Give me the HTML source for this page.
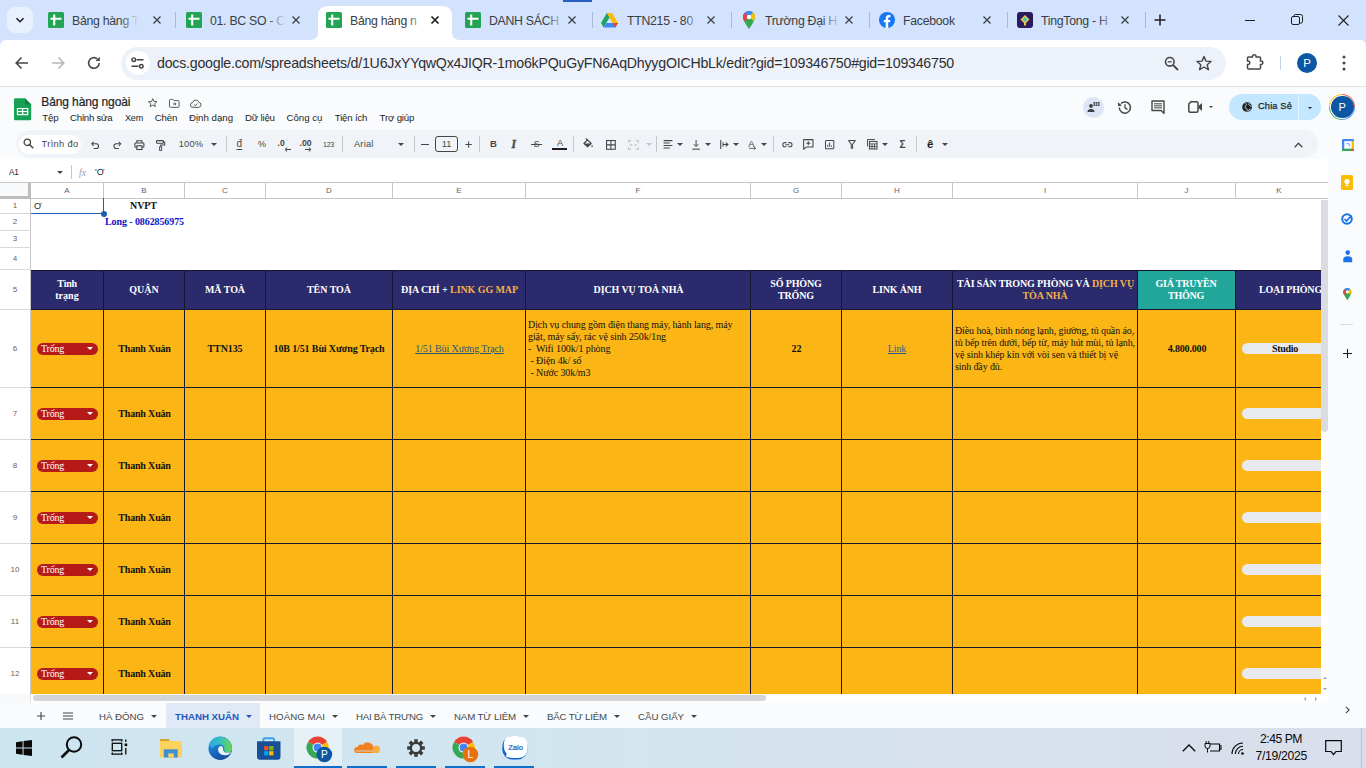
<!DOCTYPE html>
<html lang="vi"><head><meta charset="utf-8"><title>Bảng hàng ngoài - Google Trang tính</title>
<style>
*{box-sizing:border-box;margin:0;padding:0}
html,body{width:1366px;height:768px;overflow:hidden;background:#fff;font-family:"Liberation Sans",sans-serif;color:#1f1f1f}
div,span,svg{position:absolute}
svg{overflow:visible}
#tabstrip{left:0;top:0;width:1366px;height:52px;background:#d3e3fd}
#navbar{left:0;top:40px;width:1366px;height:47px;background:#fff;border-bottom:1px solid #dde1e8;border-radius:6px 6px 0 0}
#omni{left:121px;top:6.500px;width:1105px;height:33px;border-radius:17px;background:#edf2fa}
#app{left:0;top:87px;width:1366px;height:641px;background:#f9fbfd}
#tb{left:16px;top:130px;width:1302px;height:28px;border-radius:14px;background:#f0f4f9}
#fbar{left:0;top:159px;width:1328px;height:23px;background:#fff}
#grid{left:0;top:182px;width:1328px;height:512px;background:#fff;overflow:hidden}
.ch{top:0;height:17px;background:#fff;border-right:1px solid #c7c7c7;border-bottom:1px solid #c7c7c7;border-top:1px solid #c7c7c7;font-size:8px;color:#5f6368;text-align:center;line-height:15px}
.rh{left:0;width:31px;background:#fff;border-right:1px solid #c7c7c7;border-bottom:1px solid #d9d9d9;font-size:8px;color:#5f6368;text-align:center}
.c{font-family:"Liberation Serif",serif;border-right:1px solid #16162e;border-bottom:1px solid #16162e;overflow:hidden}
.h{background:#2a2a6c;border-top:1px solid #16162e}
.o{background:#fbb615}
.chip{left:6px;width:61px;height:12px;border-radius:6px;background:#b51a18}
.chip i{position:absolute;right:5px;top:4.5px;border-left:3px solid transparent;border-right:3px solid transparent;border-top:3.5px solid #fff}
.pill{left:7px;width:90px;height:11px;border-radius:6px;background:#e8eaed}
#sheetbar{left:0;top:703px;width:1366px;height:25px;background:#f9fbfd}
.arr{border-left:3px solid transparent;border-right:3px solid transparent;border-top:3.5px solid #444746;width:0;height:0}
#taskbar{left:0;top:728px;width:1366px;height:40px;background:linear-gradient(90deg,#cde5f0 0%,#d2e6f0 40%,#d7e2ed 68%,#d9deea 100%)}
.sep{width:1px;background:#c7c7c7}
</style></head><body>
<div id="tabstrip"><div style="left:7px;top:7px;width:26px;height:26px;border-radius:8px;background:#e8effd"></div><svg style="left:14px;top:14px" width="12" height="12" viewBox="0 0 12 12"><path d="M2.5 4.2 L6 7.7 L9.5 4.2" fill="none" stroke="#1f1f1f" stroke-width="1.6"/></svg><div style="left:563px;top:0;width:29px;height:1.500px;background:#2a5fc0"></div><svg style="left:310px;top:6px" width="150" height="34" viewBox="0 0 150 34"><path d="M0 34 Q8 34 8 26 V10 Q8 0 18 0 H132 Q142 0 142 10 V26 Q142 34 150 34 Z" fill="#fff"/></svg><svg style="left:48px;top:12px" width="16" height="16" viewBox="0 0 16 16"><rect width="16" height="16" rx="1.5" fill="#23a455"/><path d="M2.500 6.800H13.500 M6.200 2.500V13.500" stroke="#fff" stroke-width="2.100" fill="none"/></svg><span class="" style="position:absolute;top:12.8px;height:16px;line-height:16px;font-size:12.3px;font-family:'Liberation Sans',sans-serif;white-space:nowrap;color:#3a3e44;left:72px;letter-spacing:-0.280px;max-width:69px;overflow:hidden;">Bảng hàng T</span><div style="left:120px;top:10px;width:22px;height:22px;background:linear-gradient(90deg,rgba(211,227,253,0),rgba(211,227,253,1) 85%)"></div><svg style="left:186px;top:12px" width="16" height="16" viewBox="0 0 16 16"><rect width="16" height="16" rx="1.5" fill="#23a455"/><path d="M2.500 6.800H13.500 M6.200 2.500V13.500" stroke="#fff" stroke-width="2.100" fill="none"/></svg><span class="" style="position:absolute;top:12.8px;height:16px;line-height:16px;font-size:12.3px;font-family:'Liberation Sans',sans-serif;white-space:nowrap;color:#3a3e44;left:210px;letter-spacing:-0.280px;max-width:78px;overflow:hidden;">01. BC SO - C</span><div style="left:267px;top:10px;width:22px;height:22px;background:linear-gradient(90deg,rgba(211,227,253,0),rgba(211,227,253,1) 85%)"></div><svg style="left:326px;top:12px" width="16" height="16" viewBox="0 0 16 16"><rect width="16" height="16" rx="1.5" fill="#23a455"/><path d="M2.500 6.800H13.500 M6.200 2.500V13.500" stroke="#fff" stroke-width="2.100" fill="none"/></svg><span class="" style="position:absolute;top:12.8px;height:16px;line-height:16px;font-size:12.3px;font-family:'Liberation Sans',sans-serif;white-space:nowrap;color:#3a3e44;left:350px;letter-spacing:-0.280px;max-width:78px;overflow:hidden;">Bảng hàng n</span><div style="left:407px;top:10px;width:22px;height:22px;background:linear-gradient(90deg,rgba(255,255,255,0),rgba(255,255,255,1) 85%)"></div><svg style="left:465px;top:12px" width="16" height="16" viewBox="0 0 16 16"><rect width="16" height="16" rx="1.5" fill="#23a455"/><path d="M2.500 6.800H13.500 M6.200 2.500V13.500" stroke="#fff" stroke-width="2.100" fill="none"/></svg><span class="" style="position:absolute;top:12.8px;height:16px;line-height:16px;font-size:12.3px;font-family:'Liberation Sans',sans-serif;white-space:nowrap;color:#3a3e44;left:489px;letter-spacing:-0.280px;max-width:78px;overflow:hidden;">DANH SÁCH</span><div style="left:546px;top:10px;width:22px;height:22px;background:linear-gradient(90deg,rgba(211,227,253,0),rgba(211,227,253,1) 85%)"></div><svg style="left:601px;top:12px" width="17" height="16" viewBox="0 0 17 16"><path d="M5.8 1H11.2L17 11H11.6Z" fill="#fbbc04"/><path d="M5.8 1L0 11L2.7 15.5L8.5 5.6Z" fill="#1fa463"/><path d="M2.7 15.5H14.3L17 11H5.4Z" fill="#4285f4"/><path d="M11.6 11H17L14.3 15.5Z" fill="#ea4335"/></svg><span class="" style="position:absolute;top:12.8px;height:16px;line-height:16px;font-size:12.3px;font-family:'Liberation Sans',sans-serif;white-space:nowrap;color:#3a3e44;left:627px;letter-spacing:-0.280px;max-width:78px;overflow:hidden;">TTN215 - 80</span><div style="left:684px;top:10px;width:22px;height:22px;background:linear-gradient(90deg,rgba(211,227,253,0),rgba(211,227,253,1) 85%)"></div><svg style="left:743px;top:11px" width="12" height="18" viewBox="0 0 12 18"><path d="M6 0C2.7 0 0 2.6 0 6c0 4 6 12 6 12s6-8 6-12C12 2.6 9.300 0 6 0z" fill="#34a853"/><path d="M6 0C2.7 0 0 2.600 0 6c0 1.300.6 3 1.500 4.700L9.800 1.400A6 6 0 0 0 6 0z" fill="#4285f4"/><path d="M9.800 1.400L6 6 10.600 9.900C11.400 8.400 12 7 12 6c0-1.900-.9-3.500-2.200-4.600z" fill="#fbbc04"/><path d="M1.500 2.100A6 6 0 0 0 0 6c0 1.300.6 3 1.500 4.700L6 6z" fill="#ea4335"/><circle cx="6" cy="6" r="2.200" fill="#fff"/></svg><span class="" style="position:absolute;top:12.8px;height:16px;line-height:16px;font-size:12.3px;font-family:'Liberation Sans',sans-serif;white-space:nowrap;color:#3a3e44;left:765px;letter-spacing:-0.280px;max-width:78px;overflow:hidden;">Trường Đại H</span><div style="left:822px;top:10px;width:22px;height:22px;background:linear-gradient(90deg,rgba(211,227,253,0),rgba(211,227,253,1) 85%)"></div><svg style="left:879px;top:12px" width="16" height="16" viewBox="0 0 16 16"><circle cx="8" cy="8" r="8" fill="#1877f2"/><path d="M11 10.300l.4-2.300H9.200V6.500c0-.700.3-1.300 1.300-1.300h1V3.200S10.600 3 9.700 3C7.800 3 6.700 4.100 6.700 6.100V8H4.700v2.300h2V16h2.500v-5.700z" fill="#fff"/></svg><span class="" style="position:absolute;top:12.8px;height:16px;line-height:16px;font-size:12.3px;font-family:'Liberation Sans',sans-serif;white-space:nowrap;color:#3a3e44;left:903px;letter-spacing:-0.280px;max-width:64px;overflow:hidden;">Facebook</span><svg style="left:1017px;top:12px" width="16" height="16" viewBox="0 0 16 16"><rect width="16" height="16" rx="3" fill="#2a1a5e"/><path d="M8 3L12.500 7.500L8 12L3.500 7.500Z" fill="#f4c542"/><path d="M8 5L10.500 7.500L8 10L5.500 7.500Z" fill="#3ec6c0"/><rect x="7" y="11" width="2" height="2.500" fill="#f4c542"/></svg><span class="" style="position:absolute;top:12.8px;height:16px;line-height:16px;font-size:12.3px;font-family:'Liberation Sans',sans-serif;white-space:nowrap;color:#3a3e44;left:1041px;letter-spacing:-0.280px;max-width:78px;overflow:hidden;">TingTong - H</span><div style="left:1098px;top:10px;width:22px;height:22px;background:linear-gradient(90deg,rgba(211,227,253,0),rgba(211,227,253,1) 85%)"></div><svg style="left:153px;top:16px" width="8" height="8" viewBox="0 0 8 8"><path d="M0.500 0.500L7.500 7.500M7.500 0.500L0.500 7.500" stroke="#3c4043" stroke-width="1.3" fill="none"/></svg><svg style="left:292px;top:16px" width="8" height="8" viewBox="0 0 8 8"><path d="M0.500 0.500L7.500 7.500M7.500 0.500L0.500 7.500" stroke="#3c4043" stroke-width="1.3" fill="none"/></svg><svg style="left:431px;top:16px" width="8" height="8" viewBox="0 0 8 8"><path d="M0.500 0.500L7.500 7.500M7.500 0.500L0.500 7.500" stroke="#1f1f1f" stroke-width="1.7" fill="none"/></svg><svg style="left:568px;top:16px" width="8" height="8" viewBox="0 0 8 8"><path d="M0.500 0.500L7.500 7.500M7.500 0.500L0.500 7.500" stroke="#3c4043" stroke-width="1.3" fill="none"/></svg><svg style="left:707px;top:16px" width="8" height="8" viewBox="0 0 8 8"><path d="M0.500 0.500L7.500 7.500M7.500 0.500L0.500 7.500" stroke="#3c4043" stroke-width="1.3" fill="none"/></svg><svg style="left:845px;top:16px" width="8" height="8" viewBox="0 0 8 8"><path d="M0.500 0.500L7.500 7.500M7.500 0.500L0.500 7.500" stroke="#3c4043" stroke-width="1.3" fill="none"/></svg><svg style="left:983px;top:16px" width="8" height="8" viewBox="0 0 8 8"><path d="M0.500 0.500L7.500 7.500M7.500 0.500L0.500 7.500" stroke="#3c4043" stroke-width="1.3" fill="none"/></svg><svg style="left:1121px;top:16px" width="8" height="8" viewBox="0 0 8 8"><path d="M0.500 0.500L7.500 7.500M7.500 0.500L0.500 7.500" stroke="#3c4043" stroke-width="1.3" fill="none"/></svg><div style="left:175px;top:12px;width:1px;height:16px;background:#a8b8d8"></div><div style="left:592px;top:12px;width:1px;height:16px;background:#a8b8d8"></div><div style="left:731px;top:12px;width:1px;height:16px;background:#a8b8d8"></div><div style="left:869px;top:12px;width:1px;height:16px;background:#a8b8d8"></div><div style="left:1007px;top:12px;width:1px;height:16px;background:#a8b8d8"></div><div style="left:1145px;top:12px;width:1px;height:16px;background:#a8b8d8"></div><svg style="left:1154px;top:14px" width="12" height="12" viewBox="0 0 12 12"><path d="M6 0.500V11.500M0.500 6H11.500" stroke="#1f1f1f" stroke-width="1.5"/></svg><div style="left:1245px;top:20px;width:10px;height:1px;background:#1f1f1f"></div><svg style="left:1291px;top:14px" width="12" height="12" viewBox="0 0 12 12"><rect x="0.500" y="2.500" width="8" height="8" rx="1.500" fill="none" stroke="#1f1f1f"/><path d="M3 2.500V1.800Q3 0.500 4.300 0.500H9.500Q11.500 0.500 11.500 2.500V7.700Q11.500 9 10.200 9H9" fill="none" stroke="#1f1f1f"/></svg><svg style="left:1338px;top:15px" width="11" height="11" viewBox="0 0 11 11"><path d="M0.500 0.500L10.500 10.500M10.500 0.500L0.500 10.500" stroke="#1f1f1f" stroke-width="1.100"/></svg></div><div id="navbar"><div id="omni"></div><svg style="left:15px;top:16px" width="14" height="14" viewBox="0 0 14 14"><path d="M13 7H1.500M6.500 1.500L1.200 7L6.500 12.500" fill="none" stroke="#444746" stroke-width="1.600"/></svg><svg style="left:51px;top:16px" width="14" height="14" viewBox="0 0 14 14"><path d="M1 7H12.500M7.500 1.500L12.800 7L7.500 12.500" fill="none" stroke="#b4b7bb" stroke-width="1.600"/></svg><svg style="left:87px;top:16px" width="14" height="14" viewBox="0 0 14 14"><path d="M12.200 7A5.300 5.300 0 1 1 10.400 3" fill="none" stroke="#444746" stroke-width="1.600"/><path d="M12.800 0.800V5H8.600Z" fill="#444746"/></svg><div style="left:125.500px;top:11px;width:24px;height:24px;border-radius:12px;background:#fff"></div><svg style="left:131px;top:17px" width="13" height="12" viewBox="0 0 13 12"><path d="M5.500 2.700H12.500M0.500 9.300H7.500" stroke="#3c4043" stroke-width="1.500"/><circle cx="2.700" cy="2.700" r="1.800" fill="none" stroke="#3c4043" stroke-width="1.400"/><circle cx="10.300" cy="9.300" r="1.800" fill="none" stroke="#3c4043" stroke-width="1.400"/></svg><span class="" style="position:absolute;top:14.0px;height:18px;line-height:18px;font-size:14.2px;font-family:'Liberation Sans',sans-serif;white-space:nowrap;color:#2d2f33;left:157px;letter-spacing:-0.232px;">docs.google.com/spreadsheets/d/1U6JxYYqwQx4JIQR-1mo6kPQuGyFN6AqDhyygOICHbLk/edit?gid=109346750#gid=109346750</span><svg style="left:1164px;top:16px" width="15" height="15" viewBox="0 0 15 15"><circle cx="5.800" cy="5.800" r="4.300" fill="none" stroke="#444746" stroke-width="1.600"/><path d="M9 9L14 14" stroke="#444746" stroke-width="1.800"/><path d="M3.800 5.800H7.800" stroke="#444746" stroke-width="1.200"/></svg><svg style="left:1196px;top:15px" width="16" height="16" viewBox="0 0 16 16"><path d="M8 1.500L10 6.100L15 6.500L11.200 9.800L12.400 14.700L8 12L3.600 14.700L4.800 9.800L1 6.500L6 6.100Z" fill="none" stroke="#444746" stroke-width="1.400" stroke-linejoin="round"/></svg><svg style="left:1246px;top:14px" width="17" height="17" viewBox="0 0 17 17"><path d="M6.500 3V2.500A1.800 1.800 0 0 1 10.100 2.500V3H13.500Q14.500 3 14.500 4V7H15A1.800 1.800 0 0 1 15 10.600H14.500V14Q14.500 15 13.500 15H2.500Q1.500 15 1.500 14V10.600H2A1.800 1.800 0 0 0 2 7H1.500V4Q1.500 3 2.500 3Z" fill="none" stroke="#444746" stroke-width="1.500"/></svg><div style="left:1280px;top:16px;width:1px;height:14px;background:#c5d4ee"></div><div style="left:1297px;top:13px;width:20px;height:20px;border-radius:10px;background:#0b57a4"></div><span class="" style="position:absolute;top:16.0px;height:15px;line-height:15px;font-size:11.5px;font-family:'Liberation Sans',sans-serif;white-space:nowrap;color:#fff;left:1307px;transform:translateX(-50%);">P</span><svg style="left:1342px;top:15px" width="4" height="16" viewBox="0 0 4 16"><circle cx="2" cy="2" r="1.500" fill="#444746"/><circle cx="2" cy="8" r="1.500" fill="#444746"/><circle cx="2" cy="14" r="1.500" fill="#444746"/></svg></div><div id="app"></div><svg style="left:14.300px;top:97.500px" width="17.200" height="22.700" viewBox="0 0 18 23"><path d="M1.500 0H11.500L18 6.500V21.500Q18 23 16.500 23H1.500Q0 23 0 21.500V1.500Q0 0 1.500 0Z" fill="#18a154"/><path d="M11.500 0L18 6.500H13Q11.500 6.500 11.500 5Z" fill="#0f8444"/><rect x="3" y="10" width="12" height="7.600" rx="0.600" fill="#fff"/><rect x="4.300" y="11.200" width="4" height="2" fill="#18a154"/><rect x="9.700" y="11.200" width="4" height="2" fill="#18a154"/><rect x="4.300" y="14.400" width="4" height="2" fill="#18a154"/><rect x="9.700" y="14.400" width="4" height="2" fill="#18a154"/></svg><span class="" style="position:absolute;top:93.7px;height:16px;line-height:16px;font-size:12px;font-family:'Liberation Sans',sans-serif;white-space:nowrap;color:#1f1f1f;left:41.3px;letter-spacing:-0.117px;-webkit-text-stroke:0.200px #1f1f1f;">Bảng hàng ngoài</span><svg style="left:148px;top:98px" width="9.500" height="9.500" viewBox="0 0 11 11"><path d="M5.500 0.800L6.900 4L10.400 4.300L7.700 6.600L8.500 10L5.500 8.200L2.500 10L3.300 6.600L0.600 4.300L4.100 4Z" fill="none" stroke="#444746" stroke-width="1"/></svg><svg style="left:168.500px;top:98.500px" width="10.500" height="8.800" viewBox="0 0 12 10"><path d="M0.500 1.500Q0.500 0.500 1.500 0.500H4.500L5.700 1.800H10.500Q11.500 1.800 11.500 2.800V8.500Q11.500 9.500 10.500 9.500H1.500Q0.500 9.500 0.500 8.500Z" fill="none" stroke="#444746" stroke-width="1"/><path d="M4.500 5.600H8M6.500 4L8.100 5.600L6.500 7.200" fill="none" stroke="#444746" stroke-width="1"/></svg><svg style="left:189.500px;top:98.500px" width="11.500" height="8.800" viewBox="0 0 13 10"><path d="M3.200 9.500A2.700 2.700 0 0 1 3 4.100A3.600 3.600 0 0 1 9.900 3.600A3 3 0 0 1 10 9.500Z" fill="none" stroke="#444746" stroke-width="1"/><path d="M4.600 6.300L6 7.600L8.500 5" fill="none" stroke="#444746" stroke-width="1"/></svg><span class="" style="position:absolute;top:111.2px;height:13px;line-height:13px;font-size:9.7px;font-family:'Liberation Sans',sans-serif;white-space:nowrap;color:#1f1f1f;left:42.3px;letter-spacing:-0.234px;">Tệp</span><span class="" style="position:absolute;top:111.2px;height:13px;line-height:13px;font-size:9.7px;font-family:'Liberation Sans',sans-serif;white-space:nowrap;color:#1f1f1f;left:70px;letter-spacing:-0.248px;">Chỉnh sửa</span><span class="" style="position:absolute;top:111.7px;height:12px;line-height:12px;font-size:9.1px;font-family:'Liberation Sans',sans-serif;white-space:nowrap;color:#1f1f1f;left:125px;letter-spacing:-0.234px;">Xem</span><span class="" style="position:absolute;top:111.2px;height:13px;line-height:13px;font-size:9.7px;font-family:'Liberation Sans',sans-serif;white-space:nowrap;color:#1f1f1f;left:154.8px;letter-spacing:-0.168px;">Chèn</span><span class="" style="position:absolute;top:111.2px;height:13px;line-height:13px;font-size:9.7px;font-family:'Liberation Sans',sans-serif;white-space:nowrap;color:#1f1f1f;left:189px;letter-spacing:-0.019px;">Định dạng</span><span class="" style="position:absolute;top:111.2px;height:13px;line-height:13px;font-size:9.7px;font-family:'Liberation Sans',sans-serif;white-space:nowrap;color:#1f1f1f;left:245px;letter-spacing:-0.209px;">Dữ liệu</span><span class="" style="position:absolute;top:111.2px;height:13px;line-height:13px;font-size:9.7px;font-family:'Liberation Sans',sans-serif;white-space:nowrap;color:#1f1f1f;left:286.5px;letter-spacing:-0.013px;">Công cụ</span><span class="" style="position:absolute;top:111.2px;height:13px;line-height:13px;font-size:9.7px;font-family:'Liberation Sans',sans-serif;white-space:nowrap;color:#1f1f1f;left:334.8px;letter-spacing:-0.201px;">Tiện ích</span><span class="" style="position:absolute;top:111.2px;height:13px;line-height:13px;font-size:9.7px;font-family:'Liberation Sans',sans-serif;white-space:nowrap;color:#1f1f1f;left:379.5px;letter-spacing:-0.170px;">Trợ giúp</span><div style="left:1083px;top:97px;width:21px;height:21px;border-radius:11px;background:#dde5f7"></div><svg style="left:1087px;top:101px" width="13" height="12" viewBox="0 0 13 12"><circle cx="4" cy="5" r="1.900" fill="#3c4043"/><path d="M0.500 11Q0.500 8 4 8Q7.500 8 7.500 11Z" fill="#3c4043"/><path d="M6.500 1H12.500V5H6.500Z" fill="#3c4043"/><path d="M8.500 1V5M10.500 1V5M6.500 3H12.500" stroke="#dde5f7" stroke-width="0.600"/></svg><svg style="left:1117px;top:100px" width="15" height="15" viewBox="0 0 15 15"><path d="M2.300 7.500A5.600 5.600 0 1 0 4 3.500" fill="none" stroke="#444746" stroke-width="1.500"/><path d="M0.800 2.200L1.200 6.200L5.100 5.500Z" fill="#444746"/><path d="M8 4.200V7.800L10.500 9.500" fill="none" stroke="#444746" stroke-width="1.300"/></svg><svg style="left:1151px;top:100px" width="14" height="14" viewBox="0 0 14 14"><path d="M1 1H13V13.400L10.200 10.500H1Z" fill="none" stroke="#444746" stroke-width="1.400" stroke-linejoin="round"/><path d="M3 3.800H11M3 5.800H11M3 7.800H11" stroke="#444746" stroke-width="1"/></svg><svg style="left:1188px;top:101px" width="15" height="12" viewBox="0 0 15 12"><path d="M2.800 0.800H8.500Q10 0.800 10 2.300V9.700Q10 11.200 8.500 11.200H2.300Q0.800 11.200 0.800 9.700V3Z" fill="none" stroke="#444746" stroke-width="1.500" stroke-linejoin="round"/><path d="M10.500 5L14 2V10L10.500 7Z" fill="#444746"/></svg><div class="arr" style="left:1209px;top:106px;border-width:2.500px 2px 0 2px"></div><div style="left:1229px;top:94px;width:92px;height:26px;border-radius:13px;background:#c2e7ff"></div><div style="left:1298px;top:94px;width:1px;height:26px;background:#e3f3ff"></div><svg style="left:1242px;top:102.200px" width="10.200" height="10.200" viewBox="0 0 10 10"><circle cx="5" cy="5" r="4.800" fill="#1f1f1f"/><path d="M3.600 1.200Q5 2.200 4 3.400Q2.600 4 3 5.400L5 7Q5.400 8.500 4.600 9.300M6.800 1.200Q6.200 2.600 7.600 3.400Q8.800 3.800 9.200 4.600M6 9.200Q6.500 7.400 8.600 6.800" fill="none" stroke="#c2e7ff" stroke-width="0.900"/></svg><span class="" style="position:absolute;top:99.6px;height:12px;line-height:12px;font-size:9.3px;font-family:'Liberation Sans',sans-serif;white-space:nowrap;color:#1f1f1f;left:1258px;letter-spacing:0.132px;-webkit-text-stroke:0.250px #1f1f1f;">Chia Sẻ</span><div class="arr" style="left:1307.500px;top:106.700px;border-width:2.300px 2.200px 0 2.200px;border-top-color:#1f1f1f"></div><div style="left:1329.400px;top:94.200px;width:25.600px;height:25.600px;border-radius:13px;background:conic-gradient(#ea4335 0 25%,#4285f4 0 50%,#34a853 0 75%,#fbbc04 0);opacity:0.850"></div><div style="left:1330.200px;top:95px;width:24px;height:24px;border-radius:12px;background:#fff"></div><div style="left:1330.800px;top:95.600px;width:22.800px;height:22.800px;border-radius:12px;background:#0b57a4"></div><span class="" style="position:absolute;top:100.3px;height:14px;line-height:14px;font-size:11px;font-family:'Liberation Sans',sans-serif;white-space:nowrap;color:#fff;left:1342.2px;transform:translateX(-50%);">P</span><div id="tb"></div><div style="left:18.500px;top:134.500px;width:62.500px;height:19px;border-radius:9.500px;background:#fff"></div><svg style="left:23px;top:138px" width="11" height="11" viewBox="0 0 11 11"><circle cx="4.300" cy="4.300" r="3.200" fill="none" stroke="#444746" stroke-width="1.300"/><path d="M6.700 6.700L10.300 10.300" stroke="#444746" stroke-width="1.500"/></svg><span class="" style="position:absolute;top:138.0px;height:12px;line-height:12px;font-size:9.3px;font-family:'Liberation Sans',sans-serif;white-space:nowrap;color:#444746;left:41.5px;letter-spacing:0.350px;max-width:36.500px;overflow:hidden;">Trình đơn</span><svg style="left:91px;top:140.5px" width="8.5" height="8" viewBox="0 0 11 10"><path d="M1 3.500H6.800A3 3 0 0 1 6.800 9.500H3.500" fill="none" stroke="#444746" stroke-width="1.300"/><path d="M3.500 1L1 3.500L3.500 6" fill="none" stroke="#444746" stroke-width="1.300"/></svg><svg style="left:113px;top:140.5px" width="8.5" height="8" viewBox="0 0 11 10"><path d="M10 3.500H4.200A3 3 0 0 0 4.200 9.500H7.500" fill="none" stroke="#444746" stroke-width="1.300"/><path d="M7.500 1L10 3.500L7.500 6" fill="none" stroke="#444746" stroke-width="1.300"/></svg><svg style="left:133.5px;top:139.5px" width="10.8" height="10.2" viewBox="0 0 12 12"><path d="M3 3.500V0.800H9V3.500" fill="none" stroke="#444746" stroke-width="1.300"/><rect x="0.700" y="3.600" width="10.600" height="5" rx="1" fill="none" stroke="#444746" stroke-width="1.300"/><rect x="3" y="6.800" width="6" height="4.400" fill="#f0f4f9" stroke="#444746" stroke-width="1.300"/></svg><svg style="left:156px;top:139.5px" width="9.3" height="11" viewBox="0 0 11 13"><rect x="0.700" y="0.700" width="8" height="3.200" rx="0.600" fill="none" stroke="#444746" stroke-width="1.300"/><path d="M8.700 2.300H10.300V6H5.500V8" fill="none" stroke="#444746" stroke-width="1.200"/><rect x="4.300" y="8" width="2.400" height="4.300" fill="none" stroke="#444746" stroke-width="1.100"/></svg><span class="" style="position:absolute;top:138.3px;height:12px;line-height:12px;font-size:9.2px;font-family:'Liberation Sans',sans-serif;white-space:nowrap;color:#444746;left:178.7px;letter-spacing:0.250px;">100%</span><div class="arr" style="left:211px;top:143px;border-top-color:#444746"></div><div class="sep" style="left:226px;top:136px;height:16px"></div><span class="" style="position:absolute;top:137.0px;height:13px;line-height:13px;font-size:10px;font-family:'Liberation Sans',sans-serif;white-space:nowrap;color:#444746;left:236.5px;text-decoration:underline;text-underline-offset:1.500px;">đ</span><span class="" style="position:absolute;top:138.3px;height:12px;line-height:12px;font-size:9px;font-family:'Liberation Sans',sans-serif;white-space:nowrap;color:#444746;left:258px;">%</span><span class="" style="position:absolute;top:138.0px;height:11px;line-height:11px;font-size:8.7px;font-family:'Liberation Sans',sans-serif;white-space:nowrap;font-weight:bold;color:#444746;left:277.5px;">.0</span><svg style="left:284px;top:147px" width="7" height="5" viewBox="0 0 7 5"><path d="M7 2.500H1.500M3.200 0.500L1 2.500L3.200 4.500" fill="none" stroke="#444746" stroke-width="1"/></svg><span class="" style="position:absolute;top:138.0px;height:11px;line-height:11px;font-size:8.7px;font-family:'Liberation Sans',sans-serif;white-space:nowrap;font-weight:bold;color:#444746;left:299.5px;">.00</span><svg style="left:305px;top:147px" width="7" height="5" viewBox="0 0 7 5"><path d="M0 2.500H5.500M3.800 0.500L6 2.500L3.800 4.500" fill="none" stroke="#444746" stroke-width="1"/></svg><span class="" style="position:absolute;top:140.0px;height:9px;line-height:9px;font-size:7px;font-family:'Liberation Sans',sans-serif;white-space:nowrap;color:#444746;left:323px;letter-spacing:-0.229px;">123</span><div class="sep" style="left:342px;top:136px;height:16px"></div><span class="" style="position:absolute;top:138.2px;height:12px;line-height:12px;font-size:9.2px;font-family:'Liberation Sans',sans-serif;white-space:nowrap;color:#444746;left:354px;letter-spacing:0.222px;">Arial</span><div class="arr" style="left:398px;top:143px;border-top-color:#444746"></div><div class="sep" style="left:414px;top:136px;height:16px"></div><div style="left:421px;top:144px;width:8px;height:1.300px;background:#444746"></div><div style="left:435px;top:136px;width:23px;height:16px;border:1px solid #444746;border-radius:3px"></div><span class="" style="position:absolute;top:138.3px;height:12px;line-height:12px;font-size:9.2px;font-family:'Liberation Sans',sans-serif;white-space:nowrap;color:#444746;left:446.5px;transform:translateX(-50%);">11</span><svg style="left:465px;top:140.8px" width="7.2" height="7.2" viewBox="0 0 9 9"><path d="M4.500 0.500V8.500M0.500 4.500H8.500" fill="none" stroke="#444746" stroke-width="1.300"/></svg><div class="sep" style="left:479px;top:136px;height:16px"></div><span class="" style="position:absolute;top:138.3px;height:12px;line-height:12px;font-size:9.5px;font-family:'Liberation Sans',sans-serif;white-space:nowrap;font-weight:bold;color:#444746;left:490px;">B</span><span class="" style="position:absolute;top:136.8px;height:15px;line-height:15px;font-size:11.5px;font-family:'Liberation Serif',serif;white-space:nowrap;font-weight:bold;color:#444746;left:511.5px;font-style:italic;-webkit-text-stroke:0.400px #444746;">I</span><span class="" style="position:absolute;top:138.3px;height:12px;line-height:12px;font-size:9.2px;font-family:'Liberation Sans',sans-serif;white-space:nowrap;color:#444746;left:533.5px;">S</span><div style="left:531px;top:144px;width:11px;height:1px;background:#444746"></div><span class="" style="position:absolute;top:137.2px;height:12px;line-height:12px;font-size:9.2px;font-family:'Liberation Sans',sans-serif;white-space:nowrap;color:#444746;left:557px;">A</span><div style="left:552px;top:148.200px;width:15px;height:1.800px;background:#1f1f1f"></div><div class="sep" style="left:573px;top:136px;height:16px"></div><svg style="left:583px;top:137.5px" width="10" height="11" viewBox="0 0 11 12"><path d="M1 6L5 2L9 6L5 9.500Z" fill="none" stroke="#444746" stroke-width="1.300" stroke-linejoin="round"/><path d="M3.200 0.500L5 2.200" fill="none" stroke="#444746" stroke-width="1.200"/><path d="M1.300 6H8.700L5 9.300Z" fill="#444746"/><path d="M10 7.500Q11 9 10.700 9.700A0.900 0.900 0 0 1 9.300 9.700Q9 9 10 7.500Z" fill="#444746"/></svg><svg style="left:606.3px;top:139.8px" width="9.8" height="9.8" viewBox="0 0 11 11"><rect x="0.600" y="0.600" width="9.800" height="9.800" fill="none" stroke="#444746" stroke-width="1.200"/><path d="M5.500 0.600V10.400M0.600 5.500H10.400" fill="none" stroke="#444746" stroke-width="1.200"/></svg><svg style="left:628.3px;top:139.5px" width="10.8" height="10" viewBox="0 0 12 11"><path d="M3.500 0.600H0.600V3.500M8.500 0.600H11.400V3.500M3.500 10.400H0.600V7.500M8.500 10.400H11.400V7.500" fill="none" stroke="#c4c7c5" stroke-width="1.200"/><path d="M1.500 5.500H4.500M7.500 5.500H10.500M3.300 4.200L4.700 5.500L3.300 6.800M8.700 4.200L7.300 5.500L8.700 6.800" fill="none" stroke="#c4c7c5" stroke-width="1"/></svg><div class="arr" style="left:646px;top:143px;border-top-color:#c4c7c5"></div><div class="sep" style="left:656px;top:136px;height:16px"></div><svg style="left:663px;top:140.2px" width="10" height="8.8" viewBox="0 0 10 10"><path d="M0 0.700H10M0 3.500H7M0 6.300H10M0 9.100H7" fill="none" stroke="#444746" stroke-width="1.200"/></svg><div class="arr" style="left:677px;top:143px;border-top-color:#444746"></div><svg style="left:692.3px;top:139.5px" width="8.2" height="10" viewBox="0 0 9 12"><path d="M4.500 0V7.500M1.800 5L4.500 7.800L7.200 5" fill="none" stroke="#444746" stroke-width="1.200"/><path d="M0 11H9" fill="none" stroke="#444746" stroke-width="1.300"/></svg><div class="arr" style="left:705px;top:143px;border-top-color:#444746"></div><svg style="left:720px;top:140px" width="8.5" height="9" viewBox="0 0 9 10"><path d="M0.600 0V10" fill="none" stroke="#444746" stroke-width="1.200"/><path d="M3 5H8.500M6.300 2.800L8.600 5L6.300 7.200" fill="none" stroke="#444746" stroke-width="1.200"/><path d="M3.200 2.500V7.500" fill="none" stroke="#444746" stroke-width="1.100"/></svg><div class="arr" style="left:733px;top:143px;border-top-color:#444746"></div><span class="" style="position:absolute;top:137.5px;height:12px;line-height:12px;font-size:9.3px;font-family:'Liberation Sans',sans-serif;white-space:nowrap;color:#444746;left:748.3px;">A</span><svg style="left:749px;top:147.3px" width="8" height="2.7" viewBox="0 0 9 3"><path d="M0 1.500H7M5.500 0L7.500 1.500L5.500 3" fill="none" stroke="#444746" stroke-width="0.900"/></svg><div class="arr" style="left:761px;top:143px;border-top-color:#444746"></div><div class="sep" style="left:773px;top:136px;height:16px"></div><svg style="left:781.5px;top:141.5px" width="10.8" height="5.4" viewBox="0 0 12 6"><path d="M5 0.700H3.200A2.300 2.300 0 0 0 3.200 5.300H5M7 0.700H8.800A2.300 2.300 0 0 1 8.800 5.300H7M3.800 3H8.200" fill="none" stroke="#444746" stroke-width="1.200"/></svg><svg style="left:802.5px;top:139.3px" width="10.6" height="10.6" viewBox="0 0 12 12"><path d="M0.700 0.700H11.300V9H4L0.700 11.600Z" fill="none" stroke="#444746" stroke-width="1.200" stroke-linejoin="round"/><path d="M6 2.600V7.200M3.700 4.900H8.300" fill="none" stroke="#444746" stroke-width="1.200"/></svg><svg style="left:825px;top:139.8px" width="9.3" height="9.3" viewBox="0 0 11 11"><rect x="0.600" y="0.600" width="9.800" height="9.800" rx="1" fill="none" stroke="#444746" stroke-width="1.200"/><path d="M3.300 8V5.500M5.500 8V3M7.700 8V6.500" fill="none" stroke="#444746" stroke-width="1.200"/></svg><svg style="left:848.3px;top:140.3px" width="7.8" height="9.3" viewBox="0 0 9 11"><path d="M0.600 0.700H8.400L5.300 5V9.800H3.700V5Z" fill="none" stroke="#444746" stroke-width="1.200" stroke-linejoin="round"/></svg><svg style="left:867.3px;top:139px" width="10.5" height="10.5" viewBox="0 0 12 12"><path d="M0.600 8.500V0.600H9" fill="none" stroke="#444746" stroke-width="1.100"/><rect x="2.800" y="2.800" width="8.600" height="8.600" fill="none" stroke="#444746" stroke-width="1.200"/><path d="M2.800 5.600H11.400M2.800 8.500H11.400M5.700 5.600V11.400M8.500 5.600V11.400" fill="none" stroke="#444746" stroke-width="1"/></svg><div class="arr" style="left:882px;top:143px;border-top-color:#444746"></div><span class="" style="position:absolute;top:137.8px;height:13px;line-height:13px;font-size:10px;font-family:'Liberation Sans',sans-serif;white-space:nowrap;font-weight:bold;color:#444746;left:899.5px;">Σ</span><div class="sep" style="left:916px;top:136px;height:16px"></div><span class="" style="position:absolute;top:136.5px;height:15px;line-height:15px;font-size:11.5px;font-family:'Liberation Sans',sans-serif;white-space:nowrap;font-weight:bold;color:#1f1f1f;left:927px;">ê</span><div style="left:927px;top:148.500px;width:7px;height:1px;background:#f0f4f9"></div><div class="arr" style="left:942px;top:143px;border-top-color:#444746"></div><svg style="left:1294px;top:142px" width="9" height="6" viewBox="0 0 9 6"><path d="M0.700 5.200L4.500 1.300L8.300 5.200" fill="none" stroke="#444746" stroke-width="1.300"/></svg><div id="fbar"></div><span class="" style="position:absolute;top:167.0px;height:11px;line-height:11px;font-size:8.2px;font-family:'Liberation Sans',sans-serif;white-space:nowrap;color:#1f1f1f;left:9px;letter-spacing:-0.258px;">A1</span><div class="arr" style="left:57px;top:171px;border-top-color:#444746"></div><div class="sep" style="left:71px;top:165px;height:14px"></div><span class="" style="position:absolute;top:166.5px;height:12px;line-height:12px;font-size:9.5px;font-family:'Liberation Serif',serif;white-space:nowrap;color:#9aa0a6;left:79px;font-style:italic;">fx</span><span class="" style="position:absolute;top:166.0px;height:12px;line-height:12px;font-size:9px;font-family:'Liberation Sans',sans-serif;white-space:nowrap;color:#1f1f1f;left:95px;">'Ơ</span><div id="grid"><div class="ch" style="left:0;width:31px;background:#f8f9fa;border-right:3px solid #bdbdbd;border-bottom:3px solid #bdbdbd;height:17px"></div><div class="ch" style="left:31px;width:73px">A</div><div class="ch" style="left:104px;width:81px">B</div><div class="ch" style="left:185px;width:81px">C</div><div class="ch" style="left:266px;width:127px">D</div><div class="ch" style="left:393px;width:133px">E</div><div class="ch" style="left:526px;width:225px">F</div><div class="ch" style="left:751px;width:91px">G</div><div class="ch" style="left:842px;width:111px">H</div><div class="ch" style="left:953px;width:185px">I</div><div class="ch" style="left:1138px;width:98px">J</div><div class="ch" style="left:1236px;width:93px;border-right:0;padding-right:7px">K</div><div class="rh" style="top:17px;height:15px;line-height:13px">1</div><div class="rh" style="top:32px;height:17px;line-height:15px">2</div><div class="rh" style="top:49px;height:17px;line-height:15px">3</div><div class="rh" style="top:66px;height:22px;line-height:21px">4</div><div class="rh" style="top:88px;height:40px;line-height:39px">5</div><div class="rh" style="top:128px;height:78px;line-height:77px">6</div><div class="rh" style="top:206px;height:52px;line-height:51px">7</div><div class="rh" style="top:258px;height:52px;line-height:51px">8</div><div class="rh" style="top:310px;height:52px;line-height:51px">9</div><div class="rh" style="top:362px;height:52px;line-height:51px">10</div><div class="rh" style="top:414px;height:52px;line-height:51px">11</div><div class="rh" style="top:466px;height:52px;line-height:51px">12</div><div style="left:0;top:0;width:1321px;height:512px;overflow:hidden"><div style="left:31px;top:16px;width:73px;height:16px;border-right:1px solid #1a5fb4;border-bottom:1px solid #1a5fb4"></div><div style="left:100.500px;top:28.500px;width:6px;height:6px;border-radius:3px;background:#1a5fb4"></div><span class="" style="position:absolute;top:17.5px;height:12px;line-height:12px;font-size:9px;font-family:'Liberation Sans',sans-serif;white-space:nowrap;color:#1f1f1f;left:34px;">Ơ</span><span class="" style="position:absolute;top:17.0px;height:13px;line-height:13px;font-size:10px;font-family:'Liberation Serif',serif;white-space:nowrap;font-weight:bold;color:#111;left:143.5px;transform:translateX(-50%);letter-spacing:-0.059px;">NVPT</span><span class="" style="position:absolute;top:33.0px;height:13px;line-height:13px;font-size:10px;font-family:'Liberation Serif',serif;white-space:nowrap;font-weight:bold;color:#1212c8;left:105px;letter-spacing:-0.092px;">Long - 0862856975</span><div class="c h" style="left:31px;top:88px;width:73px;height:40px;"></div><div class="c h" style="left:104px;top:88px;width:81px;height:40px;"></div><div class="c h" style="left:185px;top:88px;width:81px;height:40px;"></div><div class="c h" style="left:266px;top:88px;width:127px;height:40px;"></div><div class="c h" style="left:393px;top:88px;width:133px;height:40px;"></div><div class="c h" style="left:526px;top:88px;width:225px;height:40px;"></div><div class="c h" style="left:751px;top:88px;width:91px;height:40px;"></div><div class="c h" style="left:842px;top:88px;width:111px;height:40px;"></div><div class="c h" style="left:953px;top:88px;width:185px;height:40px;"></div><div class="c h" style="left:1138px;top:88px;width:98px;height:40px;background:#21a699;"></div><div class="c h" style="left:1236px;top:88px;width:94px;height:40px;"></div><span class="" style="position:absolute;top:95.0px;height:13px;line-height:13px;font-size:10px;font-family:'Liberation Serif',serif;white-space:nowrap;font-weight:bold;color:#fff;left:67px;transform:translateX(-50%);letter-spacing:-0.270px;">Tình</span><span class="" style="position:absolute;top:107.0px;height:13px;line-height:13px;font-size:10px;font-family:'Liberation Serif',serif;white-space:nowrap;font-weight:bold;color:#fff;left:67px;transform:translateX(-50%);letter-spacing:0.031px;">trạng</span><span class="" style="position:absolute;top:101.0px;height:13px;line-height:13px;font-size:10px;font-family:'Liberation Serif',serif;white-space:nowrap;font-weight:bold;color:#fff;left:144px;transform:translateX(-50%);letter-spacing:0.012px;">QUẬN</span><span class="" style="position:absolute;top:101.0px;height:13px;line-height:13px;font-size:10px;font-family:'Liberation Serif',serif;white-space:nowrap;font-weight:bold;color:#fff;left:225px;transform:translateX(-50%);letter-spacing:-0.078px;">MÃ TOÀ</span><span class="" style="position:absolute;top:101.0px;height:13px;line-height:13px;font-size:10px;font-family:'Liberation Serif',serif;white-space:nowrap;font-weight:bold;color:#fff;left:329px;transform:translateX(-50%);letter-spacing:-0.054px;">TÊN TOÀ</span><span class="" style="position:absolute;top:101.0px;height:13px;line-height:13px;font-size:10px;font-family:'Liberation Serif',serif;white-space:nowrap;font-weight:bold;color:#fff;left:401px;letter-spacing:-0.084px;">ĐỊA CHỈ + <span style="position:static;color:#f6b04a">LINK GG MAP</span></span><span class="" style="position:absolute;top:101.0px;height:13px;line-height:13px;font-size:10px;font-family:'Liberation Serif',serif;white-space:nowrap;font-weight:bold;color:#fff;left:638.5px;transform:translateX(-50%);letter-spacing:-0.094px;">DỊCH VỤ TOÀ NHÀ</span><span class="" style="position:absolute;top:95.0px;height:13px;line-height:13px;font-size:10px;font-family:'Liberation Serif',serif;white-space:nowrap;font-weight:bold;color:#fff;left:796px;transform:translateX(-50%);letter-spacing:-0.127px;">SỐ PHÒNG</span><span class="" style="position:absolute;top:107.0px;height:13px;line-height:13px;font-size:10px;font-family:'Liberation Serif',serif;white-space:nowrap;font-weight:bold;color:#fff;left:796px;transform:translateX(-50%);letter-spacing:-0.134px;">TRỐNG</span><span class="" style="position:absolute;top:101.0px;height:13px;line-height:13px;font-size:10px;font-family:'Liberation Serif',serif;white-space:nowrap;font-weight:bold;color:#fff;left:897px;transform:translateX(-50%);letter-spacing:-0.162px;">LINK ẢNH</span><span class="" style="position:absolute;top:95.0px;height:13px;line-height:13px;font-size:10px;font-family:'Liberation Serif',serif;white-space:nowrap;font-weight:bold;color:#fff;left:957px;letter-spacing:-0.120px;">TÀI SẢN TRONG PHÒNG VÀ <span style="position:static;color:#f6b04a">DỊCH VỤ</span></span><span class="" style="position:absolute;top:107.0px;height:13px;line-height:13px;font-size:10px;font-family:'Liberation Serif',serif;white-space:nowrap;font-weight:bold;color:#f6b04a;left:1045px;transform:translateX(-50%);letter-spacing:-0.121px;">TÒA NHÀ</span><span class="" style="position:absolute;top:95.0px;height:13px;line-height:13px;font-size:10px;font-family:'Liberation Serif',serif;white-space:nowrap;font-weight:bold;color:#fff;left:1186px;transform:translateX(-50%);letter-spacing:-0.244px;">GIÁ TRUYỀN</span><span class="" style="position:absolute;top:107.0px;height:13px;line-height:13px;font-size:10px;font-family:'Liberation Serif',serif;white-space:nowrap;font-weight:bold;color:#fff;left:1186px;transform:translateX(-50%);letter-spacing:-0.247px;">THÔNG</span><span class="" style="position:absolute;top:101.0px;height:13px;line-height:13px;font-size:10px;font-family:'Liberation Serif',serif;white-space:nowrap;font-weight:bold;color:#fff;left:1259px;letter-spacing:-0.173px;">LOẠI PHÒNG</span><div class="c o" style="left:31px;top:128px;width:73px;height:78px;"></div><div class="c o" style="left:104px;top:128px;width:81px;height:78px;"></div><div class="c o" style="left:185px;top:128px;width:81px;height:78px;"></div><div class="c o" style="left:266px;top:128px;width:127px;height:78px;"></div><div class="c o" style="left:393px;top:128px;width:133px;height:78px;"></div><div class="c o" style="left:526px;top:128px;width:225px;height:78px;"></div><div class="c o" style="left:751px;top:128px;width:91px;height:78px;"></div><div class="c o" style="left:842px;top:128px;width:111px;height:78px;"></div><div class="c o" style="left:953px;top:128px;width:185px;height:78px;"></div><div class="c o" style="left:1138px;top:128px;width:98px;height:78px;"></div><div class="c o" style="left:1236px;top:128px;width:94px;height:78px;"></div><div class="chip" style="left:37px;top:160.6px"><i></i></div><span class="" style="position:absolute;top:159.6px;height:13px;line-height:13px;font-size:10px;font-family:'Liberation Serif',serif;white-space:nowrap;color:#fff;left:41px;letter-spacing:-0.219px;">Trống</span><span class="" style="position:absolute;top:160.1px;height:13px;line-height:13px;font-size:10px;font-family:'Liberation Serif',serif;white-space:nowrap;font-weight:bold;color:#111;left:144.5px;transform:translateX(-50%);letter-spacing:-0.170px;">Thanh Xuân</span><div class="pill" style="left:1242px;top:161.1px"></div><div class="c o" style="left:31px;top:206px;width:73px;height:52px;"></div><div class="c o" style="left:104px;top:206px;width:81px;height:52px;"></div><div class="c o" style="left:185px;top:206px;width:81px;height:52px;"></div><div class="c o" style="left:266px;top:206px;width:127px;height:52px;"></div><div class="c o" style="left:393px;top:206px;width:133px;height:52px;"></div><div class="c o" style="left:526px;top:206px;width:225px;height:52px;"></div><div class="c o" style="left:751px;top:206px;width:91px;height:52px;"></div><div class="c o" style="left:842px;top:206px;width:111px;height:52px;"></div><div class="c o" style="left:953px;top:206px;width:185px;height:52px;"></div><div class="c o" style="left:1138px;top:206px;width:98px;height:52px;"></div><div class="c o" style="left:1236px;top:206px;width:94px;height:52px;"></div><div class="chip" style="left:37px;top:225.6px"><i></i></div><span class="" style="position:absolute;top:224.6px;height:13px;line-height:13px;font-size:10px;font-family:'Liberation Serif',serif;white-space:nowrap;color:#fff;left:41px;letter-spacing:-0.219px;">Trống</span><span class="" style="position:absolute;top:225.1px;height:13px;line-height:13px;font-size:10px;font-family:'Liberation Serif',serif;white-space:nowrap;font-weight:bold;color:#111;left:144.5px;transform:translateX(-50%);letter-spacing:-0.170px;">Thanh Xuân</span><div class="pill" style="left:1242px;top:226.1px"></div><div class="c o" style="left:31px;top:258px;width:73px;height:52px;"></div><div class="c o" style="left:104px;top:258px;width:81px;height:52px;"></div><div class="c o" style="left:185px;top:258px;width:81px;height:52px;"></div><div class="c o" style="left:266px;top:258px;width:127px;height:52px;"></div><div class="c o" style="left:393px;top:258px;width:133px;height:52px;"></div><div class="c o" style="left:526px;top:258px;width:225px;height:52px;"></div><div class="c o" style="left:751px;top:258px;width:91px;height:52px;"></div><div class="c o" style="left:842px;top:258px;width:111px;height:52px;"></div><div class="c o" style="left:953px;top:258px;width:185px;height:52px;"></div><div class="c o" style="left:1138px;top:258px;width:98px;height:52px;"></div><div class="c o" style="left:1236px;top:258px;width:94px;height:52px;"></div><div class="chip" style="left:37px;top:277.6px"><i></i></div><span class="" style="position:absolute;top:276.6px;height:13px;line-height:13px;font-size:10px;font-family:'Liberation Serif',serif;white-space:nowrap;color:#fff;left:41px;letter-spacing:-0.219px;">Trống</span><span class="" style="position:absolute;top:277.1px;height:13px;line-height:13px;font-size:10px;font-family:'Liberation Serif',serif;white-space:nowrap;font-weight:bold;color:#111;left:144.5px;transform:translateX(-50%);letter-spacing:-0.170px;">Thanh Xuân</span><div class="pill" style="left:1242px;top:278.1px"></div><div class="c o" style="left:31px;top:310px;width:73px;height:52px;"></div><div class="c o" style="left:104px;top:310px;width:81px;height:52px;"></div><div class="c o" style="left:185px;top:310px;width:81px;height:52px;"></div><div class="c o" style="left:266px;top:310px;width:127px;height:52px;"></div><div class="c o" style="left:393px;top:310px;width:133px;height:52px;"></div><div class="c o" style="left:526px;top:310px;width:225px;height:52px;"></div><div class="c o" style="left:751px;top:310px;width:91px;height:52px;"></div><div class="c o" style="left:842px;top:310px;width:111px;height:52px;"></div><div class="c o" style="left:953px;top:310px;width:185px;height:52px;"></div><div class="c o" style="left:1138px;top:310px;width:98px;height:52px;"></div><div class="c o" style="left:1236px;top:310px;width:94px;height:52px;"></div><div class="chip" style="left:37px;top:329.6px"><i></i></div><span class="" style="position:absolute;top:328.6px;height:13px;line-height:13px;font-size:10px;font-family:'Liberation Serif',serif;white-space:nowrap;color:#fff;left:41px;letter-spacing:-0.219px;">Trống</span><span class="" style="position:absolute;top:329.1px;height:13px;line-height:13px;font-size:10px;font-family:'Liberation Serif',serif;white-space:nowrap;font-weight:bold;color:#111;left:144.5px;transform:translateX(-50%);letter-spacing:-0.170px;">Thanh Xuân</span><div class="pill" style="left:1242px;top:330.1px"></div><div class="c o" style="left:31px;top:362px;width:73px;height:52px;"></div><div class="c o" style="left:104px;top:362px;width:81px;height:52px;"></div><div class="c o" style="left:185px;top:362px;width:81px;height:52px;"></div><div class="c o" style="left:266px;top:362px;width:127px;height:52px;"></div><div class="c o" style="left:393px;top:362px;width:133px;height:52px;"></div><div class="c o" style="left:526px;top:362px;width:225px;height:52px;"></div><div class="c o" style="left:751px;top:362px;width:91px;height:52px;"></div><div class="c o" style="left:842px;top:362px;width:111px;height:52px;"></div><div class="c o" style="left:953px;top:362px;width:185px;height:52px;"></div><div class="c o" style="left:1138px;top:362px;width:98px;height:52px;"></div><div class="c o" style="left:1236px;top:362px;width:94px;height:52px;"></div><div class="chip" style="left:37px;top:381.6px"><i></i></div><span class="" style="position:absolute;top:380.6px;height:13px;line-height:13px;font-size:10px;font-family:'Liberation Serif',serif;white-space:nowrap;color:#fff;left:41px;letter-spacing:-0.219px;">Trống</span><span class="" style="position:absolute;top:381.1px;height:13px;line-height:13px;font-size:10px;font-family:'Liberation Serif',serif;white-space:nowrap;font-weight:bold;color:#111;left:144.5px;transform:translateX(-50%);letter-spacing:-0.170px;">Thanh Xuân</span><div class="pill" style="left:1242px;top:382.1px"></div><div class="c o" style="left:31px;top:414px;width:73px;height:52px;"></div><div class="c o" style="left:104px;top:414px;width:81px;height:52px;"></div><div class="c o" style="left:185px;top:414px;width:81px;height:52px;"></div><div class="c o" style="left:266px;top:414px;width:127px;height:52px;"></div><div class="c o" style="left:393px;top:414px;width:133px;height:52px;"></div><div class="c o" style="left:526px;top:414px;width:225px;height:52px;"></div><div class="c o" style="left:751px;top:414px;width:91px;height:52px;"></div><div class="c o" style="left:842px;top:414px;width:111px;height:52px;"></div><div class="c o" style="left:953px;top:414px;width:185px;height:52px;"></div><div class="c o" style="left:1138px;top:414px;width:98px;height:52px;"></div><div class="c o" style="left:1236px;top:414px;width:94px;height:52px;"></div><div class="chip" style="left:37px;top:433.6px"><i></i></div><span class="" style="position:absolute;top:432.6px;height:13px;line-height:13px;font-size:10px;font-family:'Liberation Serif',serif;white-space:nowrap;color:#fff;left:41px;letter-spacing:-0.219px;">Trống</span><span class="" style="position:absolute;top:433.1px;height:13px;line-height:13px;font-size:10px;font-family:'Liberation Serif',serif;white-space:nowrap;font-weight:bold;color:#111;left:144.5px;transform:translateX(-50%);letter-spacing:-0.170px;">Thanh Xuân</span><div class="pill" style="left:1242px;top:434.1px"></div><div class="c o" style="left:31px;top:466px;width:73px;height:52px;"></div><div class="c o" style="left:104px;top:466px;width:81px;height:52px;"></div><div class="c o" style="left:185px;top:466px;width:81px;height:52px;"></div><div class="c o" style="left:266px;top:466px;width:127px;height:52px;"></div><div class="c o" style="left:393px;top:466px;width:133px;height:52px;"></div><div class="c o" style="left:526px;top:466px;width:225px;height:52px;"></div><div class="c o" style="left:751px;top:466px;width:91px;height:52px;"></div><div class="c o" style="left:842px;top:466px;width:111px;height:52px;"></div><div class="c o" style="left:953px;top:466px;width:185px;height:52px;"></div><div class="c o" style="left:1138px;top:466px;width:98px;height:52px;"></div><div class="c o" style="left:1236px;top:466px;width:94px;height:52px;"></div><div class="chip" style="left:37px;top:485.6px"><i></i></div><span class="" style="position:absolute;top:484.6px;height:13px;line-height:13px;font-size:10px;font-family:'Liberation Serif',serif;white-space:nowrap;color:#fff;left:41px;letter-spacing:-0.219px;">Trống</span><span class="" style="position:absolute;top:485.1px;height:13px;line-height:13px;font-size:10px;font-family:'Liberation Serif',serif;white-space:nowrap;font-weight:bold;color:#111;left:144.5px;transform:translateX(-50%);letter-spacing:-0.170px;">Thanh Xuân</span><div class="pill" style="left:1242px;top:486.1px"></div><span class="" style="position:absolute;top:160.0px;height:13px;line-height:13px;font-size:10px;font-family:'Liberation Serif',serif;white-space:nowrap;font-weight:bold;color:#111;left:225px;transform:translateX(-50%);letter-spacing:-0.094px;">TTN135</span><span class="" style="position:absolute;top:160.0px;height:13px;line-height:13px;font-size:10px;font-family:'Liberation Serif',serif;white-space:nowrap;font-weight:bold;color:#111;left:329px;transform:translateX(-50%);letter-spacing:-0.124px;">10B 1/51 Bùi Xương Trạch</span><span class="" style="position:absolute;top:160.0px;height:13px;line-height:13px;font-size:10px;font-family:'Liberation Serif',serif;white-space:nowrap;color:#27557a;left:459.5px;transform:translateX(-50%);letter-spacing:-0.098px;text-decoration:underline;">1/51 Bùi Xương Trạch</span><span class="" style="position:absolute;top:136.3px;height:13px;line-height:13px;font-size:10px;font-family:'Liberation Serif',serif;white-space:nowrap;color:#111;left:528px;letter-spacing:-0.094px;">Dịch vụ chung gồm điện thang máy, hành lang, máy</span><span class="" style="position:absolute;top:148.2px;height:13px;line-height:13px;font-size:10px;font-family:'Liberation Serif',serif;white-space:nowrap;color:#111;left:528px;letter-spacing:-0.086px;">giặt, máy sấy, rác vệ sinh 250k/1ng</span><span class="" style="position:absolute;top:160.2px;height:13px;line-height:13px;font-size:10px;font-family:'Liberation Serif',serif;white-space:nowrap;color:#111;left:528px;letter-spacing:-0.074px;">-&nbsp; Wifi 100k/1 phòng</span><span class="" style="position:absolute;top:172.1px;height:13px;line-height:13px;font-size:10px;font-family:'Liberation Serif',serif;white-space:nowrap;color:#111;left:528px;letter-spacing:-0.076px;">&nbsp;- Điện 4k/ số</span><span class="" style="position:absolute;top:184.1px;height:13px;line-height:13px;font-size:10px;font-family:'Liberation Serif',serif;white-space:nowrap;color:#111;left:528px;letter-spacing:-0.093px;">&nbsp;- Nước 30k/m3</span><span class="" style="position:absolute;top:160.0px;height:13px;line-height:13px;font-size:10px;font-family:'Liberation Serif',serif;white-space:nowrap;font-weight:bold;color:#111;left:796.5px;transform:translateX(-50%);">22</span><span class="" style="position:absolute;top:160.0px;height:13px;line-height:13px;font-size:10px;font-family:'Liberation Serif',serif;white-space:nowrap;color:#2c5c96;left:897px;transform:translateX(-50%);letter-spacing:-0.098px;text-decoration:underline;">Link</span><span class="" style="position:absolute;top:142.3px;height:13px;line-height:13px;font-size:10px;font-family:'Liberation Serif',serif;white-space:nowrap;color:#111;left:955px;letter-spacing:-0.111px;">Điều hoà, bình nóng lạnh, giường, tủ quần áo,</span><span class="" style="position:absolute;top:154.2px;height:13px;line-height:13px;font-size:10px;font-family:'Liberation Serif',serif;white-space:nowrap;color:#111;left:955px;letter-spacing:-0.094px;">tủ bếp trên dưới, bếp từ, máy hút mùi, tủ lạnh,</span><span class="" style="position:absolute;top:166.2px;height:13px;line-height:13px;font-size:10px;font-family:'Liberation Serif',serif;white-space:nowrap;color:#111;left:955px;letter-spacing:-0.092px;">vệ sinh khép kín với vòi sen và thiết bị vệ</span><span class="" style="position:absolute;top:178.1px;height:13px;line-height:13px;font-size:10px;font-family:'Liberation Serif',serif;white-space:nowrap;color:#111;left:955px;letter-spacing:-0.134px;">sinh đầy đủ.</span><span class="" style="position:absolute;top:160.0px;height:13px;line-height:13px;font-size:10px;font-family:'Liberation Serif',serif;white-space:nowrap;font-weight:bold;color:#111;left:1187px;transform:translateX(-50%);letter-spacing:-0.167px;">4.800.000</span><span class="" style="position:absolute;top:160.0px;height:13px;line-height:13px;font-size:10px;font-family:'Liberation Serif',serif;white-space:nowrap;font-weight:bold;color:#111;left:1285px;transform:translateX(-50%);letter-spacing:-0.299px;">Studio</span></div></div><div style="left:1321px;top:199px;width:7px;height:494px;background:#fff"></div><div style="left:1321px;top:200px;width:7px;height:232px;background:#dbdce1;border-radius:0 0 3.500px 3.500px"></div><div style="left:1321px;top:672px;width:7px;height:22px;background:#fff"></div><div class="arr" style="left:1323px;top:677px;border-width:0 2px 2.500px 2px;border-top:0;border-bottom:2.500px solid #9aa0a6;border-left:2px solid transparent;border-right:2px solid transparent"></div><div class="arr" style="left:1323px;top:688px;border-width:2.500px 2px 0 2px;border-top-color:#9aa0a6"></div><div style="left:0;top:694px;width:1328px;height:9px;background:#fff"></div><div style="left:0;top:694px;width:31px;height:9px;background:#f8f9fa;border-right:1px solid #e0e0e0"></div><div style="left:33px;top:695px;width:733px;height:6px;background:#d3d5da;border-radius:3px"></div><div style="left:1304px;top:696.500px;width:0;height:0;border-top:2px solid transparent;border-bottom:2px solid transparent;border-right:2.500px solid #9aa0a6"></div><div style="left:1315px;top:696.500px;width:0;height:0;border-top:2px solid transparent;border-bottom:2px solid transparent;border-left:2.500px solid #9aa0a6"></div><div style="left:1328px;top:122px;width:38px;height:606px;background:#f9fbfd"></div><svg style="left:1341.500px;top:138.500px" width="12" height="12" viewBox="0 0 14 14"><rect width="14" height="14" rx="1.500" fill="#4285f4"/><rect x="2.500" y="2.500" width="9" height="9" fill="#fff"/><path d="M11.500 11.500H14V12.500Q14 14 12.500 14H11.500Z" fill="#ea4335"/><rect x="0" y="11.500" width="11.500" height="2.500" fill="#34a853"/><rect x="11.500" y="2.500" width="2.500" height="9" fill="#fbbc04"/><rect x="2.500" y="11.500" width="9" height="2.500" fill="#34a853"/><rect x="0" y="2.500" width="2.500" height="9" fill="#4285f4"/><path d="M5 5.500H8.500V9" fill="none" stroke="#4285f4" stroke-width="0.900"/></svg><svg style="left:1341px;top:175px" width="12" height="15" viewBox="0 0 12 15"><rect width="12" height="15" rx="1.500" fill="#fbbc04"/><circle cx="6" cy="6.500" r="2.600" fill="#fff"/><rect x="4.800" y="9.500" width="2.400" height="1.800" fill="#fff"/></svg><svg style="left:1341px;top:213px" width="12" height="12" viewBox="0 0 12 12"><circle cx="6" cy="6" r="4.800" fill="none" stroke="#1a73e8" stroke-width="2"/><path d="M3.500 6L5.500 8L10.500 2.500" fill="none" stroke="#1a73e8" stroke-width="1.700"/></svg><svg style="left:1343px;top:250.300px" width="9.500" height="12.500" viewBox="0 0 9.500 12.500"><circle cx="4.750" cy="2.600" r="2.300" fill="#1a73e8"/><path d="M0.300 12.300V9.500Q0.300 6.300 4.750 6.300Q9.200 6.300 9.200 9.500V12.300Z" fill="#1a73e8"/></svg><svg style="left:1343.400px;top:288.200px" width="8.700" height="12.200" viewBox="0 0 12 18"><path d="M6 0C2.700 0 0 2.600 0 6c0 4 6 12 6 12s6-8 6-12C12 2.600 9.300 0 6 0z" fill="#34a853"/><path d="M6 0C2.700 0 0 2.600 0 6c0 1.300.6 3 1.500 4.700L9.800 1.400A6 6 0 0 0 6 0z" fill="#4285f4"/><path d="M9.800 1.400L6 6 10.600 9.900C11.400 8.400 12 7 12 6c0-1.900-.9-3.500-2.200-4.600z" fill="#fbbc04"/><path d="M1.500 2.100A6 6 0 0 0 0 6c0 1.300.6 3 1.500 4.700L6 6z" fill="#ea4335"/><circle cx="6" cy="6" r="2.200" fill="#fff"/></svg><div style="left:1340px;top:324px;width:13px;height:1px;background:#dadce0"></div><svg style="left:1343.100px;top:349.200px" width="9" height="9" viewBox="0 0 10 10"><path d="M5 0V10M0 5H10" stroke="#1f1f1f" stroke-width="1.200"/></svg><div id="sheetbar"></div><svg style="left:1345px;top:705.500px" width="5" height="8" viewBox="0 0 6 9"><path d="M1 0.800L5 4.500L1 8.200" fill="none" stroke="#444746" stroke-width="1.300"/></svg><div style="left:166px;top:703px;width:94px;height:25px;background:#e1e9f7"></div><svg style="left:37px;top:712px" width="8" height="8" viewBox="0 0 8 8"><path d="M4 0V8M0 4H8" stroke="#444746" stroke-width="1.100"/></svg><svg style="left:63px;top:712px" width="10" height="8" viewBox="0 0 10 8"><path d="M0 1H10M0 4H10M0 7H10" stroke="#444746" stroke-width="1.100"/></svg><span class="" style="position:absolute;top:709.8px;height:13px;line-height:13px;font-size:9.7px;font-family:'Liberation Sans',sans-serif;white-space:nowrap;color:#444746;left:99px;letter-spacing:-0.031px;">HÀ ĐÔNG</span><div class="arr" style="left:151px;top:715px;border-top-color:#444746"></div><span class="" style="position:absolute;top:709.8px;height:13px;line-height:13px;font-size:9.7px;font-family:'Liberation Sans',sans-serif;white-space:nowrap;font-weight:bold;color:#2458b8;left:175px;letter-spacing:-0.005px;">THANH XUÂN</span><div class="arr" style="left:246px;top:715px;border-top-color:#2458b8"></div><span class="" style="position:absolute;top:709.8px;height:13px;line-height:13px;font-size:9.7px;font-family:'Liberation Sans',sans-serif;white-space:nowrap;color:#444746;left:269px;letter-spacing:0.061px;">HOÀNG MAI</span><div class="arr" style="left:332px;top:715px;border-top-color:#444746"></div><span class="" style="position:absolute;top:709.8px;height:13px;line-height:13px;font-size:9.7px;font-family:'Liberation Sans',sans-serif;white-space:nowrap;color:#444746;left:356px;letter-spacing:-0.250px;">HAI BÀ TRƯNG</span><div class="arr" style="left:430px;top:715px;border-top-color:#444746"></div><span class="" style="position:absolute;top:709.8px;height:13px;line-height:13px;font-size:9.7px;font-family:'Liberation Sans',sans-serif;white-space:nowrap;color:#444746;left:454px;letter-spacing:-0.141px;">NAM TỪ LIÊM</span><div class="arr" style="left:523px;top:715px;border-top-color:#444746"></div><span class="" style="position:absolute;top:709.8px;height:13px;line-height:13px;font-size:9.7px;font-family:'Liberation Sans',sans-serif;white-space:nowrap;color:#444746;left:547px;letter-spacing:-0.176px;">BẮC TỪ LIÊM</span><div class="arr" style="left:614px;top:715px;border-top-color:#444746"></div><span class="" style="position:absolute;top:709.8px;height:13px;line-height:13px;font-size:9.7px;font-family:'Liberation Sans',sans-serif;white-space:nowrap;color:#444746;left:638px;letter-spacing:-0.037px;">CẦU GIẤY</span><div class="arr" style="left:691px;top:715px;border-top-color:#444746"></div><div id="taskbar"></div><div style="left:294px;top:728px;width:48px;height:40px;background:rgba(255,255,255,0.450)"></div><svg style="left:16px;top:739.500px" width="16" height="16" viewBox="0 0 17 17"><path d="M0 2.300L7 1.300V8H0ZM8 1.150L17 0V8H8ZM0 9H7V15.700L0 14.700ZM8 9H17V17L8 15.850Z" fill="#0a0a0a"/></svg><svg style="left:60px;top:735px" width="24" height="24" viewBox="0 0 24 24"><circle cx="14" cy="9.500" r="7.200" fill="none" stroke="#0a0a0a" stroke-width="2"/><path d="M9 15L1.500 22.500" stroke="#0a0a0a" stroke-width="2.600"/></svg><svg style="left:111px;top:739px" width="17" height="16" viewBox="0 0 17 16"><path d="M0.500 0.800H11.500M0.500 15.200H11.500" stroke="#0a0a0a" stroke-width="1.300"/><rect x="1.300" y="4.300" width="9.400" height="7.400" fill="none" stroke="#0a0a0a" stroke-width="1.300"/><path d="M1.300 0.800V2.500M10.700 0.800V2.500M1.300 15.200V13.500M10.700 15.200V13.500" stroke="#0a0a0a" stroke-width="1.300"/><path d="M14.800 0.500V3M14.800 9V15.500" stroke="#0a0a0a" stroke-width="1.300"/><rect x="13.600" y="4.500" width="2.600" height="2.600" fill="#0a0a0a"/></svg><svg style="left:160px;top:738.500px" width="22" height="18.500" viewBox="0 0 22 18.500"><path d="M0 0.800Q0 0 0.800 0H8.500Q9.300 0 9.300 0.800V3H0Z" fill="#d9a227"/><path d="M0 2.800Q0 2 0.800 2H21.200Q22 2 22 2.800V17.700Q22 18.500 21.200 18.500H0.800Q0 18.500 0 17.700Z" fill="#fcd35e"/><path d="M3.800 10.300H17.700V18.500H3.800Z" fill="#3f8fd2"/><path d="M8.300 14.400H13.800V18.500H8.300Z" fill="#fcd35e"/></svg><svg style="left:207.500px;top:735.500px" width="24.500" height="24.500" viewBox="0 0 25 25"><defs><linearGradient id="eg1" x1="0.200" y1="0" x2="0.700" y2="1"><stop offset="0" stop-color="#2f9fe6"/><stop offset="0.550" stop-color="#1769c0"/><stop offset="1" stop-color="#184a9a"/></linearGradient><linearGradient id="eg2" x1="0" y1="0.500" x2="1" y2="0.500"><stop offset="0" stop-color="#2ea7e6"/><stop offset="0.450" stop-color="#31bfc2"/><stop offset="1" stop-color="#6ad94a"/></linearGradient></defs><circle cx="12.500" cy="12.500" r="12" fill="url(#eg1)"/><path d="M0.800 10A12 12 0 0 1 24.500 12.500Q24.300 17.200 19.500 17Q16.500 16.800 16.500 14Q17 9.500 12.500 8.800Q7.500 8.500 4.500 12.500Q3 9.500 0.800 10Z" fill="url(#eg2)"/><path d="M10.200 13.500Q10.500 10.800 13 10.200Q15.800 10.600 15.500 13.200Q15.300 16.800 19.500 17Q22 17 23.500 16Q21.500 20 17 19.600Q10.500 19 10.200 13.500Z" fill="#e6f2f8"/></svg><svg style="left:256.500px;top:736.500px" width="23.500" height="23" viewBox="0 0 24 23"><path d="M6.500 4.500V2.800Q6.500 1 8.300 1H15.700Q17.500 1 17.500 2.800V4.500" fill="none" stroke="#3aa3e6" stroke-width="1.900"/><path d="M0 4H24V20Q24 23 21 23H3Q0 23 0 20Z" fill="#184f98"/><rect x="7.300" y="9" width="4.300" height="4.300" fill="#f25022"/><rect x="12.500" y="9" width="4.300" height="4.300" fill="#7fba00"/><rect x="7.300" y="14.200" width="4.300" height="4.300" fill="#00a4ef"/><rect x="12.500" y="14.200" width="4.300" height="4.300" fill="#ffb900"/></svg><svg style="left:306px;top:735.500px" width="29" height="27" viewBox="0 0 30 28"><circle cx="12" cy="12" r="11.500" fill="#fff"/><path d="M12 12L2.040 6.250A11.500 11.500 0 0 1 21.960 6.250Z" fill="#ea4335"/><path d="M12 12L21.960 6.250A11.500 11.500 0 0 1 12 23.500Z" fill="#fbbc04"/><path d="M12 12L12 23.500A11.500 11.500 0 0 1 2.040 6.250Z" fill="#34a853"/><circle cx="12" cy="12" r="5.300" fill="#fff"/><circle cx="12" cy="12" r="4.200" fill="#4285f4"/><circle cx="19" cy="19.200" r="8.100" fill="#0b57a4"/><text x="19" y="23" font-family="Liberation Sans,sans-serif" font-size="10.500" fill="#fff" text-anchor="middle">P</text></svg><svg style="left:452px;top:735.500px" width="29" height="27" viewBox="0 0 30 28"><circle cx="12" cy="12" r="11.500" fill="#fff"/><path d="M12 12L2.040 6.250A11.500 11.500 0 0 1 21.960 6.250Z" fill="#ea4335"/><path d="M12 12L21.960 6.250A11.500 11.500 0 0 1 12 23.500Z" fill="#fbbc04"/><path d="M12 12L12 23.500A11.500 11.500 0 0 1 2.040 6.250Z" fill="#34a853"/><circle cx="12" cy="12" r="5.300" fill="#fff"/><circle cx="12" cy="12" r="4.200" fill="#4285f4"/><circle cx="19" cy="19.200" r="8.100" fill="#e8710a"/><text x="19" y="23" font-family="Liberation Sans,sans-serif" font-size="10.500" fill="#fff" text-anchor="middle">L</text></svg><svg style="left:354px;top:741px" width="26" height="12" viewBox="0 0 26 12"><path d="M3 12A3 3 0 0 1 3.500 6A3.500 3.500 0 0 1 8.500 4A6 6 0 0 1 19.500 6.500L18.500 12Z" fill="#f48120"/><path d="M19.500 6.500A3 3 0 0 1 25.500 9.500Q25.500 11 25 12H18Z" fill="#faad3f"/><path d="M2 10H19" stroke="#cfe6f0" stroke-width="0.800"/></svg><svg style="left:406.500px;top:738.500px" width="18" height="18" viewBox="-10.500 -10.500 21 21"><g fill="#3a3a3a"><rect x="-2" y="-10.300" width="4" height="5" transform="rotate(0)"/><rect x="-2" y="-10.300" width="4" height="5" transform="rotate(45)"/><rect x="-2" y="-10.300" width="4" height="5" transform="rotate(90)"/><rect x="-2" y="-10.300" width="4" height="5" transform="rotate(135)"/><rect x="-2" y="-10.300" width="4" height="5" transform="rotate(180)"/><rect x="-2" y="-10.300" width="4" height="5" transform="rotate(225)"/><rect x="-2" y="-10.300" width="4" height="5" transform="rotate(270)"/><rect x="-2" y="-10.300" width="4" height="5" transform="rotate(315)"/></g><circle r="6" fill="none" stroke="#3a3a3a" stroke-width="2.700"/></svg><svg style="left:501.500px;top:735.700px" width="26" height="23.600" viewBox="0 0 26 23.600"><rect x="0.300" y="0" width="25.400" height="23.400" rx="10" fill="#0d63d6"/><path d="M10.500 0H15.500Q25.700 0 25.700 10V12.500Q25.700 21.500 16.500 21.900H11Q6 21.700 4 20.500L4.600 17.800Q1.600 14.500 1.700 10Q1.800 3.500 5 1Q7 0 10.500 0Z" fill="#fdfeff"/><text x="13.600" y="14.200" font-family="Liberation Sans,sans-serif" font-size="7.600" fill="#2a5fc0" text-anchor="middle" stroke="#2a5fc0" stroke-width="0.250">Zalo</text></svg><div style="left:294px;top:766px;width:48px;height:2px;background:#0f6fcb"></div><div style="left:347px;top:766px;width:40px;height:2px;background:#0f6fcb"></div><div style="left:396px;top:766px;width:40px;height:2px;background:#0f6fcb"></div><div style="left:445px;top:766px;width:40px;height:2px;background:#0f6fcb"></div><div style="left:494px;top:766px;width:40px;height:2px;background:#0f6fcb"></div><svg style="left:1182px;top:744px" width="14" height="8" viewBox="0 0 14 8"><path d="M0.800 7.200L7 1L13.200 7.200" fill="none" stroke="#0a0a0a" stroke-width="1.300"/></svg><svg style="left:1204px;top:741px" width="18" height="12" viewBox="0 0 18 12"><path d="M6 3H15.500V10H6" fill="none" stroke="#0a0a0a" stroke-width="1.100"/><path d="M15.500 4.800H17V8.200H15.500" fill="none" stroke="#0a0a0a" stroke-width="1.100"/><path d="M2.200 0V2.500M4.800 0V2.500" stroke="#0a0a0a" stroke-width="1"/><path d="M1 2.500H6V5Q6 7.500 3.500 7.500Q1 7.500 1 5Z" fill="none" stroke="#0a0a0a" stroke-width="1"/><path d="M3.500 7.500V11.500" stroke="#0a0a0a" stroke-width="1"/></svg><svg style="left:1231px;top:742px" width="14" height="14" viewBox="0 0 14 14"><circle cx="11.500" cy="11.500" r="1.300" fill="#0a0a0a"/><path d="M7.500 12A4.500 4.500 0 0 1 12 7.500M4.300 12A7.700 7.700 0 0 1 12 4.300M1 12A11 11 0 0 1 12 1" fill="none" stroke="#0a0a0a" stroke-width="1.100"/></svg><span class="" style="position:absolute;top:730.5px;height:16px;line-height:16px;font-size:12.2px;font-family:'Liberation Sans',sans-serif;white-space:nowrap;color:#0a0a0a;left:1260px;letter-spacing:-0.484px;">2:45 PM</span><span class="" style="position:absolute;top:748.0px;height:16px;line-height:16px;font-size:12.2px;font-family:'Liberation Sans',sans-serif;white-space:nowrap;color:#0a0a0a;left:1255.5px;letter-spacing:-0.304px;">7/19/2025</span><svg style="left:1325px;top:740px" width="17" height="16" viewBox="0 0 17 16"><path d="M0.700 0.700H16.300V11.500H11L8.500 14.500L6 11.500H0.700Z" fill="none" stroke="#0a0a0a" stroke-width="1.200"/></svg><div style="left:1361px;top:728px;width:1px;height:40px;background:#b9bfcc"></div></body></html>
